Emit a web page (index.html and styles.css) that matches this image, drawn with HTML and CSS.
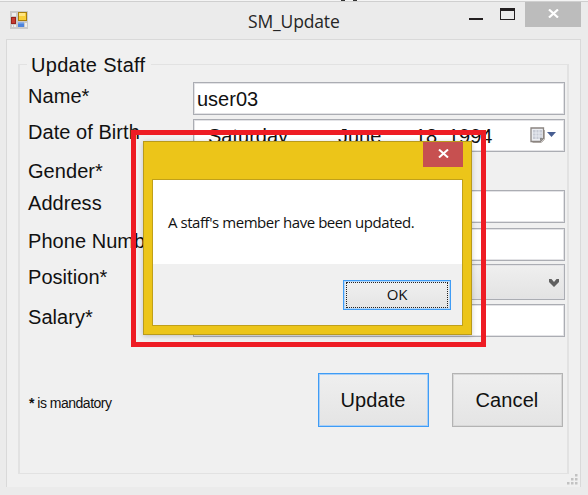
FILE: index.html
```html
<!DOCTYPE html>
<html lang="en">
<head>
<meta charset="utf-8">
<title>SM_Update</title>
<link rel="stylesheet" href="styles.css">
</head>
<body>
<div class="backdrop"><i></i><i></i></div>
<div class="window">
  <header class="titlebar">
    <svg class="appicon" width="18" height="18" viewBox="0 0 18 18">
      <rect width="18" height="18" fill="#cacaca"/>
      <path d="M2 2h4v3H2zM2 14h1v2H2zM4 14h2v2H4zM15 12h2v4h-2z" fill="#eee"/>
      <rect x="1.500" y="6.500" width="4" height="6" fill="#c63b31" stroke="#98221b"/>
      <rect x="8.500" y="1.500" width="8" height="8" fill="#f9cf38" stroke="#a87e0b"/>
      <path d="M9 2h6v3H9z" fill="#ffe582"/>
      <rect x="8" y="11.500" width="6" height="4.500" fill="#4d83dc"/>
      <path d="M8 11.500h6v1H8z" fill="#8db4f3"/>
    </svg>
    <h1 class="title">SM_Update</h1>
    <div class="controls">
      <svg width="48" height="25" viewBox="0 0 48 25"><path d="M2 16h14v2H2z" fill="#231f20"/><path d="M33 6h15v12H33zM34 9v8h13V9z" fill="#231f20" fill-rule="evenodd"/></svg>
      <span class="close">
        <svg width="11" height="9" viewBox="0 0 11 9"><path d="M1 0.500l9 8M10 0.500l-9 8" stroke="#fff" stroke-width="2.200"/></svg>
      </span>
    </div>
  </header>
  <main class="client">
    <fieldset class="group">
      <legend>Update Staff</legend>
      <div class="form">
        <label>Name*</label><div class="field">user03</div>
        <label>Date of Birth</label>
        <div class="field date">
          <span class="day">Saturday</span><span class="month">June</span><span class="num">18</span><span class="year">1994</span>
          <svg class="calendar" width="26" height="17" viewBox="0 0 26 17">
            <path d="M2.500 15.500h9l3-3V3" fill="none" stroke="#b8b3af" stroke-width="1"/>
            <path d="M1 1h12.500v10.500l-3 3H1z" fill="#eceef2" stroke="#8a8480" stroke-width="1.300"/>
            <path d="M3 3h9v9H3z" fill="#c6cad4"/>
            <path d="M3 6h9M3 9h9M6 3v9M9 3v9" stroke="#eef0f6" stroke-width=".8"/>
            <path d="M10 14v-3h3.500z" fill="#888"/>
            <path d="M17 5h9l-4.500 5z" fill="#465d91"/>
          </svg>
        </div>
        <label>Gender*</label><div></div>
        <label>Address</label><div class="field"></div>
        <label>Phone Number</label><div class="field"></div>
        <label>Position*</label>
        <div class="field select"><svg width="10" height="9" viewBox="0 0 10 9"><path d="M0 0h2.500L5 3 7.500 0H10v3L5 8 0 3z" fill="#606060"/></svg></div>
        <label>Salary*</label><div class="field"></div>
      </div>
      <div class="footer">
        <span class="note"><b>*</b> is mandatory</span>
        <span class="button primary">Update</span>
        <span class="button">Cancel</span>
      </div>
    </fieldset>
    <svg class="grip" width="11" height="11" viewBox="0 0 11 11"><path d="M8 0h2.500v2.500H8zM4 4h2.500v2.500H4zM8 4h2.500v2.500H8zM0 8h2.500v2.500H0zM4 8h2.500v2.500H4zM8 8h2.500v2.500H8z" fill="#c2c2c2"/></svg>
  </main>
</div>
<section class="dialog">
  <div class="dialog-bar">
    <span class="dialog-close"><svg width="11" height="9" viewBox="0 0 11 9"><path d="M1 0.500l9 8M10 0.500l-9 8" stroke="#fff" stroke-width="2"/></svg></span>
  </div>
  <div class="dialog-body">
    <p class="message">A staff's member have been updated.</p>
    <div class="actions"><span class="ok"><span>OK</span></span></div>
  </div>
</section>
<div class="highlight"></div>
</body>
</html>
```
FILE: styles.css
```css
* { box-sizing: border-box; }
body {
  margin: 0;
  width: 588px;
  height: 495px;
  overflow: hidden;
  background: #ebebeb;
  color: #111;
  font: 20px/24px "Liberation Sans", Arial, sans-serif;
}
.backdrop {
  height: 1px;
  background: #f4f4f4;
  display: flex;
  gap: 8px;
  padding-left: 341px;
}
.backdrop i { width: 4px; height: 1px; background: #333; }
.window {
  height: 494px;
  border-top: 1px solid #cfcfcf;
  padding: 0 7px 8px 6px;
}
.titlebar {
  height: 37px;
  display: grid;
  grid-template-columns: 188px 1fr 121px;
  margin-right: -7px;
}
.appicon { margin: 9px 0 0 4px; }
.title {
  margin: 7px 0 0;
  padding-left: 54px;
  font: 17.500px/25px "Open Sans", "Noto Sans", sans-serif;
  letter-spacing: -.15px;
  color: #262626;
}
.controls { display: flex; }
.controls > svg { flex: none; }
.close {
  width: 56px;
  height: 25px;
  margin-left: 10px;
  flex: none;
  background: #bcbcbc;
  display: flex;
  justify-content: center;
  padding-top: 7px;
}
.client {
  position: relative;
  height: 448px;
  border: 1px solid #d9d9d9;
  border-bottom: 0;
  background: #f0f0f0;
  padding: 12px 11px 0;
}
.group {
  margin: 0;
  min-width: 0;
  height: 422px;
  border: 2px solid #e2e2e2;
  border-top-width: 1px;
  border-bottom-width: 1px;
  padding: 0 3px 0 7px;
}
legend {
  padding: 1px 3px 0 4px;
  height: 24px;
  width: 124px;
  white-space: nowrap;
  letter-spacing: .3px;
}
.form {
  display: grid;
  grid-template-columns: 166px 372px;
  grid-template-rows: 37px 39px 32px 38px 36px 40px 33px;
  margin-top: 6px;
}
.form label { padding: 1px 0 0 1px; white-space: nowrap; letter-spacing: .05px; }
.form label:first-child { padding-top: 2px; }
.field {
  height: 33px;
  border: 1px solid #abadb3;
  box-shadow: inset 0 0 0 1px #e3e3e6;
  background: #fff;
  padding: 4px 3px;
}
.date { display: flex; padding-left: 14px; padding-top: 4px; }
.day { width: 130px; }
.month { width: 77px; }
.num { width: 33px; }
.year { width: 82px; }
.calendar { margin-top: 3px; }
.select {
  height: 36px;
  background: linear-gradient(#efefef, #e3e3e3);
  display: flex;
  justify-content: flex-end;
  padding: 14px 5px;
}
.footer {
  display: flex;
  padding-right: 2px;
  margin-top: 36px;
}
.note {
  font-size: 14px;
  letter-spacing: -.5px;
  width: 291px;
  flex: none;
  padding: 18px 0 0 2px;
}
.button {
  width: 111px;
  height: 54px;
  flex: none;
  border: 1px solid #b3b3b3;
  box-shadow: inset 0 0 0 1px #d8d8d8;
  background: linear-gradient(#efefef, #e4e4e4);
  text-align: center;
  line-height: 52px;
  letter-spacing: .1px;
  padding-right: 1px;
  margin-left: 23px;
}
.button.primary {
  margin-left: 0;
  border-color: #3f9cf5;
  box-shadow: inset 0 0 0 1px #a8cff7;
}
.grip { position: absolute; right: 2px; bottom: 2px; }
.dialog {
  position: absolute;
  left: 143px;
  top: 141px;
  width: 329px;
  height: 194px;
  background: #ecc519;
  border: 1px solid #b89a1c;
  box-shadow: 0 1px 5px rgba(0, 0, 0, .2);
  padding: 0 8px 8px;
}
.dialog-bar { height: 37px; display: flex; justify-content: flex-end; }
.dialog-close {
  width: 40px;
  height: 25px;
  background: #c75050;
  display: flex;
  justify-content: center;
  padding-top: 7px;
}
.dialog-body {
  height: 147px;
  border: 1px solid #c0a01a;
  background: #f0f0f0;
}
.message {
  margin: 0;
  height: 84px;
  background: #fff;
  padding: 30px 0 0 15px;
  font: 15px/24px "Open Sans", "Noto Sans", sans-serif;
  letter-spacing: -.44px;
  white-space: nowrap;
}
.actions { display: flex; justify-content: flex-end; padding: 16px 11px 0; }
.ok {
  width: 108px;
  height: 30px;
  border: 1px solid #3f9cf5;
  box-shadow: inset 0 0 0 1px #b5d8fa;
  background: linear-gradient(#f0f0f0, #e4e4e4);
  padding: 1px 2px;
  display: flex;
}
.ok span {
  flex: 1;
  border: 1px dotted #222;
  text-align: center;
  font: 15px/23px "Open Sans", "Noto Sans", sans-serif;
  letter-spacing: -.3px;
}
.highlight {
  position: absolute;
  left: 131px;
  top: 130px;
  width: 355px;
  height: 217px;
  border: 5px solid #ee1c24;
}
```
